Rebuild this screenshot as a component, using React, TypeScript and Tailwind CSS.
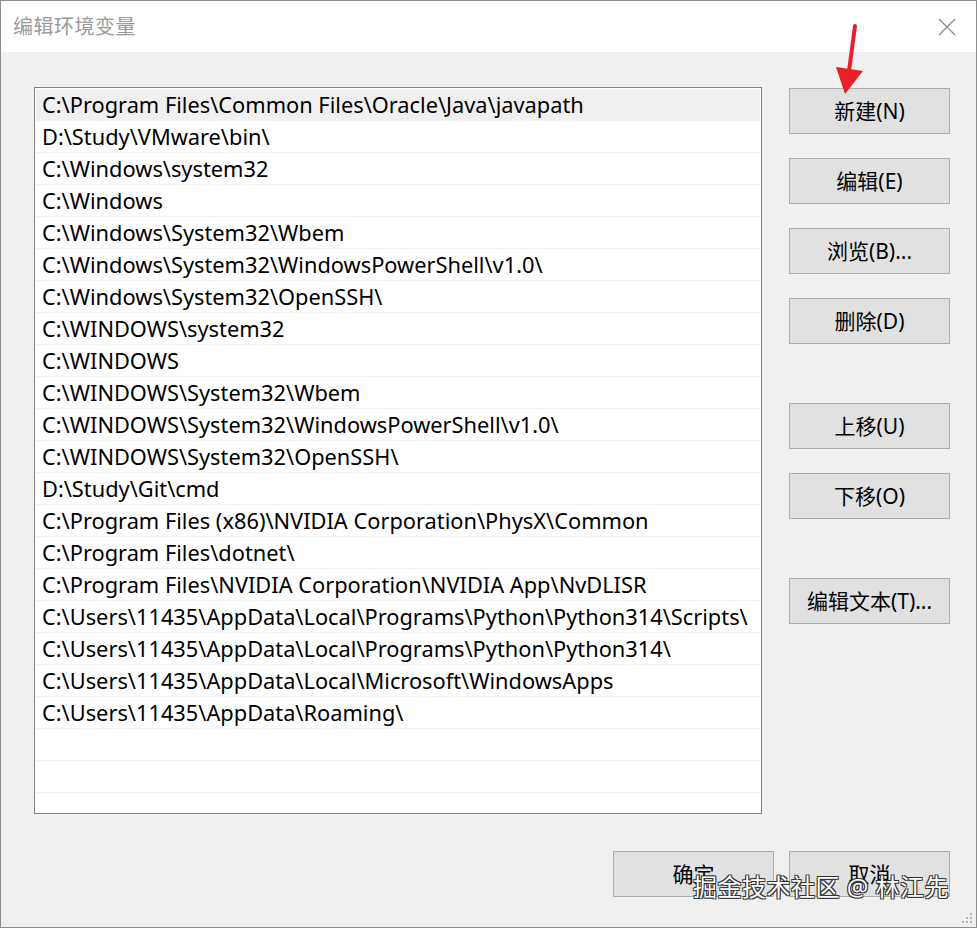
import React from "react"

const paths: string[] = [
  "C:\\Program Files\\Common Files\\Oracle\\Java\\javapath",
  "D:\\Study\\VMware\\bin\\",
  "C:\\Windows\\system32",
  "C:\\Windows",
  "C:\\Windows\\System32\\Wbem",
  "C:\\Windows\\System32\\WindowsPowerShell\\v1.0\\",
  "C:\\Windows\\System32\\OpenSSH\\",
  "C:\\WINDOWS\\system32",
  "C:\\WINDOWS",
  "C:\\WINDOWS\\System32\\Wbem",
  "C:\\WINDOWS\\System32\\WindowsPowerShell\\v1.0\\",
  "C:\\WINDOWS\\System32\\OpenSSH\\",
  "D:\\Study\\Git\\cmd",
  "C:\\Program Files (x86)\\NVIDIA Corporation\\PhysX\\Common",
  "C:\\Program Files\\dotnet\\",
  "C:\\Program Files\\NVIDIA Corporation\\NVIDIA App\\NvDLISR",
  "C:\\Users\\11435\\AppData\\Local\\Programs\\Python\\Python314\\Scripts\\",
  "C:\\Users\\11435\\AppData\\Local\\Programs\\Python\\Python314\\",
  "C:\\Users\\11435\\AppData\\Local\\Microsoft\\WindowsApps",
  "C:\\Users\\11435\\AppData\\Roaming\\",
  "",
  "",
]

// Latin glyphs from Noto Sans, Chinese from the CJK face
const font = {fontFamily: '"Noto Sans", "Noto Sans CJK SC", sans-serif'}

const Button: React.FC<{label: string; className?: string}> = ({label, className}) => (
  <button
    className={`w-[161px] h-[46px] bg-[#e1e1e1] border border-[#adadad] text-[21px] text-black leading-none ${className ?? ""}`}
  >
    {label}
  </button>
)

const App: React.FC = () => {
  const [selected, setSelected] = React.useState<number>(0)

  return (
    <div
      className="relative w-[977px] h-[928px] bg-[#f0f0f0] border border-[#8c8c8c] flex flex-col overflow-hidden"
      style={font}
    >
      {/* title bar */}
      <div className="h-[51px] bg-white flex items-center justify-between pl-[12px] pr-[20px] shrink-0">
        <span className="text-[20px] text-[#9a9a9a] tracking-[0.5px]">编辑环境变量</span>
        <svg width="18" height="18" viewBox="0 0 18 18">
          <path d="M1 1 L17 17 M17 1 L1 17" stroke="#8a8a8a" strokeWidth="1.2" fill="none" />
        </svg>
      </div>

      <div className="flex flex-col pl-[33px] pt-[35px]">
        <div className="flex">
          {/* path list */}
          <div className="w-[728px] h-[727px] bg-white border border-[#828282] p-px overflow-hidden">
            {paths.map((p, i) => (
              <div
                key={i}
                onClick={() => p && setSelected(i)}
                className={`h-[32px] border-b border-[#f0f0f0] pl-[6px] pt-[2px] flex items-center text-[21.8px] text-black whitespace-nowrap ${
                  i === selected ? "bg-[#f0f0f0]" : ""
                }`}
              >
                {p}
              </div>
            ))}
          </div>

          {/* side buttons */}
          <div className="flex flex-col ml-[27px] pt-px">
            <Button label="新建(N)" />
            <Button label="编辑(E)" className="mt-[24px]" />
            <Button label="浏览(B)..." className="mt-[24px]" />
            <Button label="删除(D)" className="mt-[24px]" />
            <Button label="上移(U)" className="mt-[59px]" />
            <Button label="下移(O)" className="mt-[24px]" />
            <Button label="编辑文本(T)..." className="mt-[59px]" />
          </div>
        </div>

        <div className="flex justify-end gap-[15px] mt-[37px] pr-[26px]">
          <Button label="确定" />
          <Button label="取消" />
        </div>
      </div>

      {/* red arrow pointing at the new button */}
      <svg className="absolute left-[828px] top-[20px]" width="40" height="78" viewBox="0 0 40 78">
        <path d="M26 5 L20 50" stroke="#e8202a" strokeWidth="4" strokeLinecap="round" fill="none" />
        <path d="M7 46 L34 50 L16 73 Z" fill="#e8202a" />
      </svg>

      {/* watermark */}
      <div
        className="absolute left-[692px] top-[868px] text-[24px] text-white tracking-[0.5px] whitespace-nowrap"
        style={{textShadow: "1px 1px 0 #333, -1px -1px 0 #333, 1px -1px 0 #333, -1px 1px 0 #333"}}
      >
        掘金技术社区 @ 林江先
      </div>

      {/* resize grip */}
      <svg className="absolute right-[3px] bottom-[3px]" width="12" height="12" viewBox="0 0 12 12">
        <rect x="9" y="1" width="2" height="2" fill="#b5b5b5" />
        <rect x="5" y="5" width="2" height="2" fill="#b5b5b5" />
        <rect x="9" y="5" width="2" height="2" fill="#b5b5b5" />
        <rect x="1" y="9" width="2" height="2" fill="#b5b5b5" />
        <rect x="5" y="9" width="2" height="2" fill="#b5b5b5" />
        <rect x="9" y="9" width="2" height="2" fill="#b5b5b5" />
      </svg>
    </div>
  )
}

export default App
